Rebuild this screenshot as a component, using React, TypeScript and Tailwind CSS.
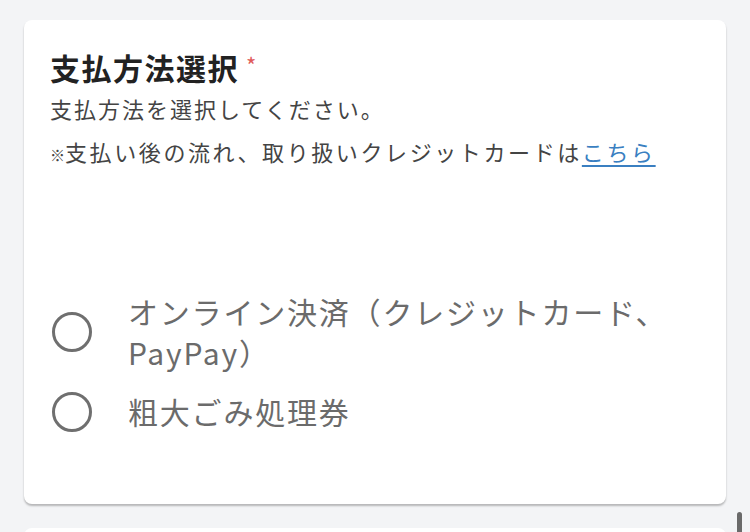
import React from "react";

const font = { fontFamily: '"Noto Sans CJK JP", "Noto Sans", sans-serif' };

function Radio({ children }: { children: React.ReactNode }) {
  return (
    <label className="flex items-center gap-[36px]">
      <span className="w-[40px] h-[40px] shrink-0 rounded-full border-[3px] border-[#6f6f6f] bg-white" />
      <span className="text-[30px] leading-[41px] text-[#6b6b6b] tracking-[1.8px]">{children}</span>
    </label>
  );
}

export default function App() {
  return (
    <div className="relative w-[750px] h-[532px] overflow-hidden bg-[#f3f4f6]" style={font}>
      <div className="mx-[24px] h-[6px] -mt-[10px] mb-[24px] bg-white rounded-b-[8px] shadow-[0_1px_3px_rgba(0,0,0,0.12)]" />
      <div className="mx-[24px] h-[484px] bg-white rounded-[8px] shadow-[0_2px_2px_rgba(0,0,0,0.25)] pl-[26px] pr-[26px] pt-[29px] flex flex-col">
        <div className="flex items-start">
          <h2 className="text-[30px] leading-[36px] font-bold text-[#222] tracking-[1.5px]">支払方法選択</h2>
          <span className="ml-[7px] mt-[4px] text-[22px] leading-[22px] text-[#e05a5a]">*</span>
        </div>
        <p className="mt-[1px] text-[22px] leading-[44px] text-[#444] tracking-[2px]">支払方法を選択してください。</p>
        <p className="-mt-[1px] text-[22px] leading-[44px] text-[#444] tracking-[2.6px]">
          <span className="text-[15px] tracking-[0px]">※</span>支払い後の流れ、取り扱いクレジットカードは
          <a className="text-[#3a7fc1] underline underline-offset-[4px]">こちら</a>
        </p>
        <div className="mt-[114px] flex flex-col gap-[18px] ml-[2px]">
          <Radio>
            オンライン決済（クレジットカード、
            <br />
            PayPay）
          </Radio>
          <Radio>粗大ごみ処理券</Radio>
        </div>
      </div>
      <div className="mx-[24px] mt-[24px] h-[40px] bg-white rounded-t-[8px]" />
      <div className="absolute right-[8px] top-[512px] w-[5px] h-[30px] rounded-full bg-[#6a6a6a]" />
    </div>
  );
}
